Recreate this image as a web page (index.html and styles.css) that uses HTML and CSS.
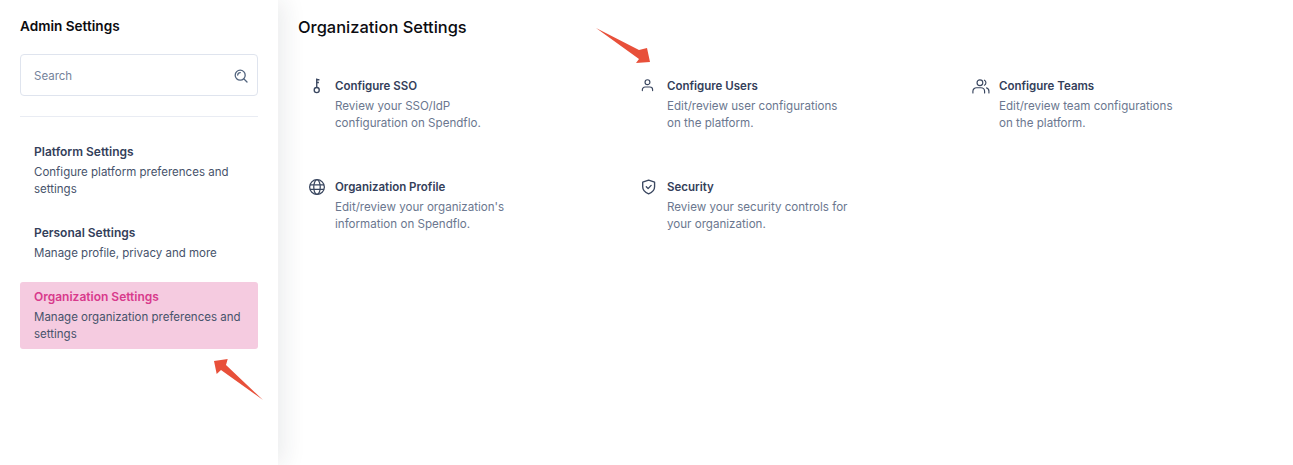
FILE: index.html
```html
<!DOCTYPE html>
<html lang="en">
<head>
<meta charset="utf-8">
<title>Organization Settings</title>
<link rel="stylesheet" href="styles.css">
</head>
<body>
<div class="app">
  <aside class="sidebar">
    <h2 class="side-title">Admin Settings</h2>
    <div class="search">
      <span class="search-text">Search</span>
      <svg class="search-icon" viewBox="0 0 14 14" fill="none" stroke="#52647e" stroke-width="1.3" stroke-linecap="round"><circle cx="6.200" cy="6.200" r="5"/><path d="M3.700 6a2.600 2.600 0 0 1 2.600-2.400"/><path d="M10 10l3 3"/></svg>
    </div>
    <div class="divider"></div>
    <nav class="nav">
      <div class="nav-item"><div class="nav-title">Platform Settings</div><div class="nav-desc">Configure platform preferences and settings</div></div>
      <div class="nav-item"><div class="nav-title">Personal Settings</div><div class="nav-desc">Manage profile, privacy and more</div></div>
      <div class="nav-item active"><div class="nav-title">Organization Settings</div><div class="nav-desc">Manage organization preferences and settings</div></div>
    </nav>
  </aside>
  <main class="main">
    <h1 class="page-title">Organization Settings</h1>
    <div class="cards">
      <div class="card">
        <div class="icon"><svg viewBox="0 0 20 20" fill="none" stroke="#3a4760" stroke-width="1.500"><circle cx="9.700" cy="13.400" r="2.800"/><path d="M9.700 10.600V0.500"/><path d="M9.700 2h3M9.700 5h2.400" stroke-width="1.800"/></svg></div>
        <div class="card-body"><div class="card-title">Configure SSO</div><div class="card-desc">Review your SSO/IdP<br>configuration on Spendflo.</div></div>
      </div>
      <div class="card">
        <div class="icon"><svg viewBox="0 0 20 20" fill="none" stroke="#3a4760" stroke-width="1.300" stroke-linecap="round"><circle cx="8.300" cy="4.600" r="2.700"/><path d="M2.600 14v-1a3 3 0 0 1 3-3h5.400a3 3 0 0 1 3 3v1"/></svg></div>
        <div class="card-body"><div class="card-title">Configure Users</div><div class="card-desc">Edit/review user configurations<br>on the platform.</div></div>
      </div>
      <div class="card">
        <div class="icon"><svg viewBox="0 0 20 20" fill="none" stroke="#3a4760" stroke-width="1.300" stroke-linecap="round"><circle cx="8.800" cy="5.200" r="3.200"/><path d="M1 16.600v-1.800a4 4 0 0 1 4-4h5a4 4 0 0 1 4 4v1.800"/><path d="M13.800 2.400a3.200 3.200 0 0 1 0 5.600"/><path d="M16.200 11a4 4 0 0 1 2.600 3.800v1.800"/></svg></div>
        <div class="card-body"><div class="card-title">Configure Teams</div><div class="card-desc">Edit/review team configurations<br>on the platform.</div></div>
      </div>
      <div class="card">
        <div class="icon"><svg viewBox="0 0 20 20" fill="none" stroke="#3a4760" stroke-width="1.400"><circle cx="10" cy="9" r="8.200"/><ellipse cx="10" cy="9" rx="3.600" ry="8.200"/><path d="M2.200 6.400h15.600M2.200 11.600h15.600"/></svg></div>
        <div class="card-body"><div class="card-title">Organization Profile</div><div class="card-desc">Edit/review your organization's<br>information on Spendflo.</div></div>
      </div>
      <div class="card">
        <div class="icon"><svg viewBox="0 0 20 20" fill="none" stroke="#3a4760" stroke-width="1.500" stroke-linecap="round" stroke-linejoin="round"><path d="M9.600 1.200l6.600 2.300v5.200c0 3.800-2.800 6.400-6.600 7.900-3.800-1.500-6.600-4.100-6.600-7.900V3.500z"/><path d="M7 8.700l2 2 3.400-3.600"/></svg></div>
        <div class="card-body"><div class="card-title">Security</div><div class="card-desc">Review your security controls for<br>your organization.</div></div>
      </div>
    </div>
  </main>
</div>
<svg class="annot annot-top" viewBox="0 0 56 38"><path d="M0 1L43 23L51 21L54 35L40 36L43 32Z" fill="#e8503a"/></svg>
<svg class="annot annot-side" viewBox="0 0 50 44"><path d="M50 43L13 8L14.700 2L1 4L3.700 17L8 13Z" fill="#e8503a"/></svg>
</body>
</html>
```
FILE: styles.css
```css
* { box-sizing: border-box; }
html, body { margin: 0; height: 100%; background: #fff; overflow: hidden; }
body { font-family: Inter, "Noto Sans", sans-serif; position: relative; }
.app { display: flex; height: 465px; }
.sidebar { width: 278px; flex: none; padding: 18px 20px 0; background: #fff; box-shadow: 6px 0 22px rgba(30, 40, 60, 0.09); position: relative; }
.side-title { margin: 0; font-size: 13.6px; line-height: 16px; font-weight: 600; color: #0c0c10; }
.search { margin-top: 20px; height: 42px; border: 1px solid #dfe4ee; border-radius: 4px; display: flex; align-items: center; justify-content: space-between; padding: 1px 9px 0 13px; }
.search-text { font-size: 11.5px; color: #75839b; }
.search-icon { width: 14px; height: 14px; }
.divider { margin-top: 20px; height: 1px; background: #e9ecf3; }
.nav { margin-top: 23px; display: flex; flex-direction: column; gap: 18px; }
.nav-item { padding: 3px 14px 5px; border-radius: 3px; }
.nav-title { font-size: 12px; line-height: 18px; font-weight: 600; color: #34405a; }
.nav-desc { margin-top: 3px; font-size: 11.5px; line-height: 17px; color: #47536b; }
.active { background: #f5cbe0; padding: 6px 14px 6px; margin-top: -3px; }
.active .nav-title { color: #d83a8c; }
.main { flex: 1; padding: 17px 20px 0; }
.page-title { margin: 0; font-size: 16.450px; line-height: 21px; font-weight: 500; color: #0c0c10; }
.cards { margin-top: 39px; display: grid; grid-template-columns: repeat(3, 332px); row-gap: 46px; }
.card { display: flex; gap: 9px; padding-left: 10px; }
.icon { width: 18px; height: 18px; flex: none; margin-top: 1px; }
.icon svg { width: 18px; height: 18px; display: block; }
.card-body { min-width: 0; }
.card-title { font-size: 11.5px; line-height: 18px; font-weight: 600; color: #34405a; }
.card-desc { margin-top: 3px; font-size: 11.6px; line-height: 17px; color: #6b778f; }
.annot { position: absolute; display: block; }
.annot-top { left: 596px; top: 27px; width: 56px; height: 38px; }
.annot-side { left: 213px; top: 357px; width: 50px; height: 44px; }
```
